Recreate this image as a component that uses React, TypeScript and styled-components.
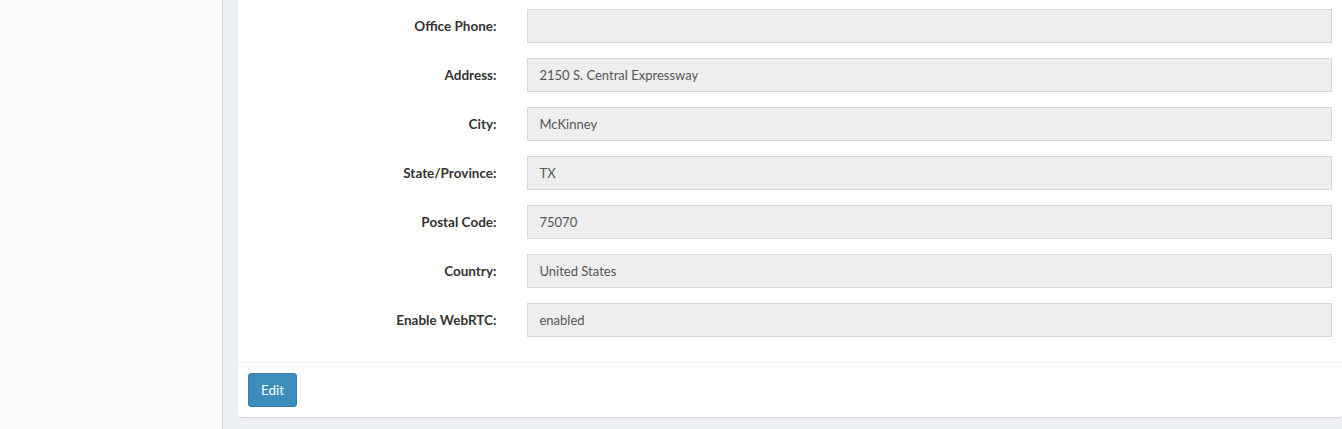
import styled, { createGlobalStyle } from "styled-components";

const GlobalStyle = createGlobalStyle`
    html, body {
        margin: 0;
        padding: 0;
        height: 100%;
        overflow: hidden;
    }
    body {
        font-family: "Lato", "Liberation Sans", sans-serif;
        background: #ecf0f5;
    }
`

type Field = {
    label: string
    value: string
}

const fields: Field[] = [
    {label: "Office Phone:", value: ""},
    {label: "Address:", value: "2150 S. Central Expressway"},
    {label: "City:", value: "McKinney"},
    {label: "State/Province:", value: "TX"},
    {label: "Postal Code:", value: "75070"},
    {label: "Country:", value: "United States"},
    {label: "Enable WebRTC:", value: "enabled"},
]

const Wrapper = styled.div`
    display: flex;
    height: 429px;
`

const Sidebar = styled.aside`
    width: 222px;
    flex-shrink: 0;
    background: #f9fafc;
    border-right: 1px solid #d2d6de;
`

const Content = styled.main`
    flex: 1;
    padding-left: 15px;
    background: #ecf0f5;
`

const Box = styled.div`
    background: #fff;
    border-radius: 0 0 3px 3px;
    box-shadow: 0 1px 1px rgba(0, 0, 0, 0.1);
`

const BoxBody = styled.div`
    padding: 9px 10px 10px;
`

const FormRow = styled.div`
    display: grid;
    grid-template-columns: 25% 75%;
    margin: 0 -15px 15px;
`

const Label = styled.label`
    padding: 7px 15px 0;
    text-align: right;
    font-size: 13.5px;
    font-weight: 700;
    color: #333;
    line-height: 20px;
`

const Input = styled.div`
    margin: 0 15px;
    height: 34px;
    box-sizing: border-box;
    padding: 6px 12px;
    background: #eee;
    border: 1px solid #d2d6de;
    font-size: 13px;
    line-height: 20px;
    color: #555;
`

const BoxFooter = styled.div`
    border-top: 1px solid #f4f4f4;
    padding: 10px;
`

const Button = styled.button`
    height: 34px;
    padding: 6px 12px;
    background: #3c8dbc;
    border: 1px solid #367fa9;
    border-radius: 3px;
    color: #fff;
    font-family: "Lato", "Liberation Sans", sans-serif;
    font-size: 13.5px;
    line-height: 20px;
    cursor: pointer;
`

export default function App() {
    return (
        <>
            <GlobalStyle/>
            <Wrapper>
                <Sidebar/>
                <Content>
                    <Box>
                        <BoxBody>
                            {fields.map(f => (
                                <FormRow key={f.label}>
                                    <Label>{f.label}</Label>
                                    <Input>{f.value}</Input>
                                </FormRow>
                            ))}
                        </BoxBody>
                        <BoxFooter>
                            <Button>Edit</Button>
                        </BoxFooter>
                    </Box>
                </Content>
            </Wrapper>
        </>
    )
}
